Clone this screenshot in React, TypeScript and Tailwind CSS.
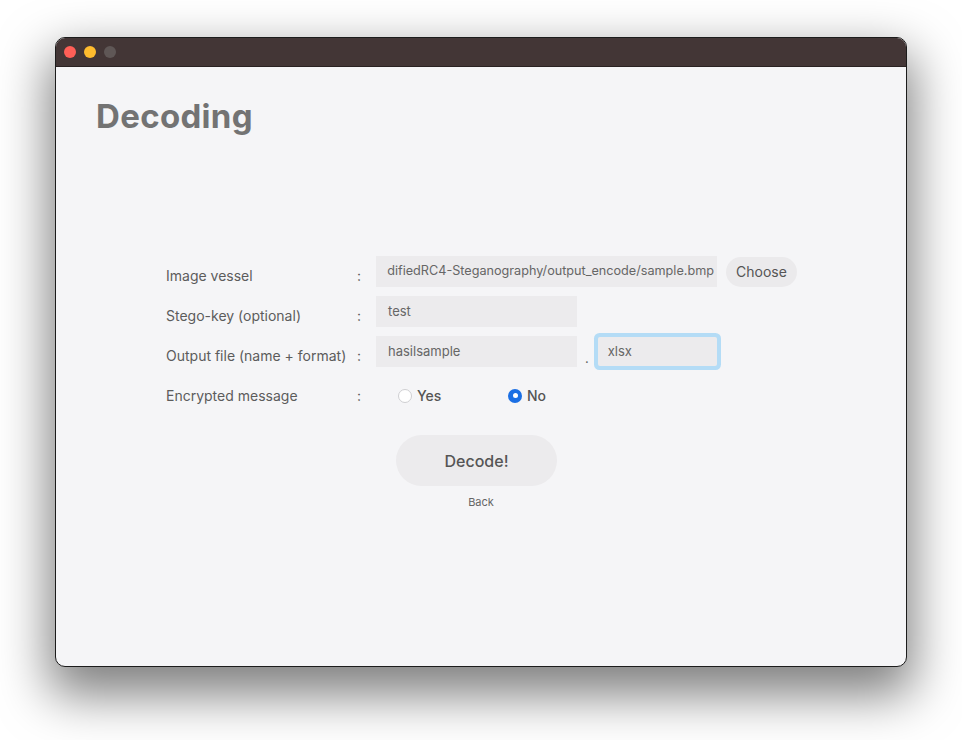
import React from "react";

const font = { fontFamily: "Inter, 'Noto Sans', sans-serif" };

function Radio({ checked }: { checked?: boolean }) {
  if (checked) {
    return (
      <span className="flex h-[14px] w-[14px] items-center justify-center rounded-full bg-[#1b6fe4]">
        <span className="h-[5px] w-[5px] rounded-full bg-white" />
      </span>
    );
  }
  return <span className="h-[14px] w-[14px] rounded-full border border-[#cfcfd2] bg-white" />;
}

function Row({ label, children }: { label: string; children: React.ReactNode }) {
  return (
    <div className="flex h-[31px] items-center">
      <div className="flex h-full w-[191px] items-center pt-[8px] text-[14px] text-[#5c5c5c]">{label}</div>
      <div className="flex h-full w-[19px] items-center pt-[8px] text-[14px] text-[#5c5c5c]">:</div>
      {children}
    </div>
  );
}

export default function App() {
  return (
    <div className="h-[740px] w-[962px] bg-white pl-[55px] pt-[37px]" style={font}>
      <div className="flex h-[630px] w-[852px] flex-col overflow-hidden rounded-[10px] border border-[#1c1c1c] bg-[#f5f5f7] shadow-[0_22px_50px_6px_rgba(0,0,0,0.5)]">
        {/* title bar */}
        <div className="flex h-[29px] shrink-0 items-center gap-[8px] border-b border-[#2a2222] bg-[#433636] pl-[8px]">
          <span className="h-[12px] w-[12px] rounded-full bg-[#fe5f57]" />
          <span className="h-[12px] w-[12px] rounded-full bg-[#febc2e]" />
          <span className="h-[12px] w-[12px] rounded-full bg-[#5f5756]" />
        </div>

        <div className="flex flex-1 flex-col pl-[40px] pt-[33px]">
          <h1 className="text-[33px] font-bold leading-[32px] tracking-[0.01em] text-[#737373]">Decoding</h1>

          <div className="ml-[70px] mt-[124px] flex flex-col gap-[9px]">
            <Row label="Image vessel">
              <div className="flex h-[31px] w-[341px] items-center bg-[#ecebed] pl-[10px] pr-[3px]">
                <div className="flex flex-1 justify-end overflow-hidden whitespace-nowrap text-[12.65px] text-[#666666]">
                  <span>difiedRC4-Steganography/output_encode/sample.bmp</span>
                </div>
              </div>
              <button className="ml-[9px] h-[30px] rounded-full bg-[#ebeaec] px-[10px] text-[14px] text-[#555555]">
                Choose
              </button>
            </Row>
            <Row label="Stego-key (optional)">
              <div className="flex h-[31px] w-[201px] items-center bg-[#ecebed] px-[12px] text-[13px] text-[#666666]">
                test
              </div>
            </Row>
            <Row label="Output file (name + format)">
              <div className="flex h-[31px] w-[201px] items-center bg-[#ecebed] px-[12px] text-[13px] text-[#666666]">
                hasilsample
              </div>
              <span className="ml-[8px] self-end pb-[2px] text-[13px] leading-[14px] text-[#666666]">.</span>
              <div className="ml-[9px] flex h-[29px] w-[119px] items-center rounded-[2px] bg-[#ecebed] px-[10px] text-[13px] text-[#666666] ring-[4px] ring-[#b4dcf6]">
                xlsx
              </div>
            </Row>
            <div className="mt-[4px] flex h-[31px] items-center">
              <div className="w-[191px] text-[14px] text-[#5c5c5c]">Encrypted message</div>
              <div className="w-[19px] text-[14px] text-[#5c5c5c]">:</div>
              <label className="ml-[22px] flex w-[110px] items-center gap-[5px] text-[14px] font-medium text-[#555555]">
                <Radio />
                Yes
              </label>
              <label className="flex items-center gap-[5px] text-[14px] font-medium text-[#555555]">
                <Radio checked />
                No
              </label>
            </div>
          </div>

          <div className="mt-[24px] flex flex-col items-center pr-[40px]">
            <button className="mr-[9px] h-[51px] w-[161px] rounded-full bg-[#ecebed] text-[16px] font-medium text-[#555555]">
              Decode!
            </button>
            <span className="mt-[8px] text-[11px] text-[#666666]">Back</span>
          </div>
        </div>
      </div>
    </div>
  );
}
